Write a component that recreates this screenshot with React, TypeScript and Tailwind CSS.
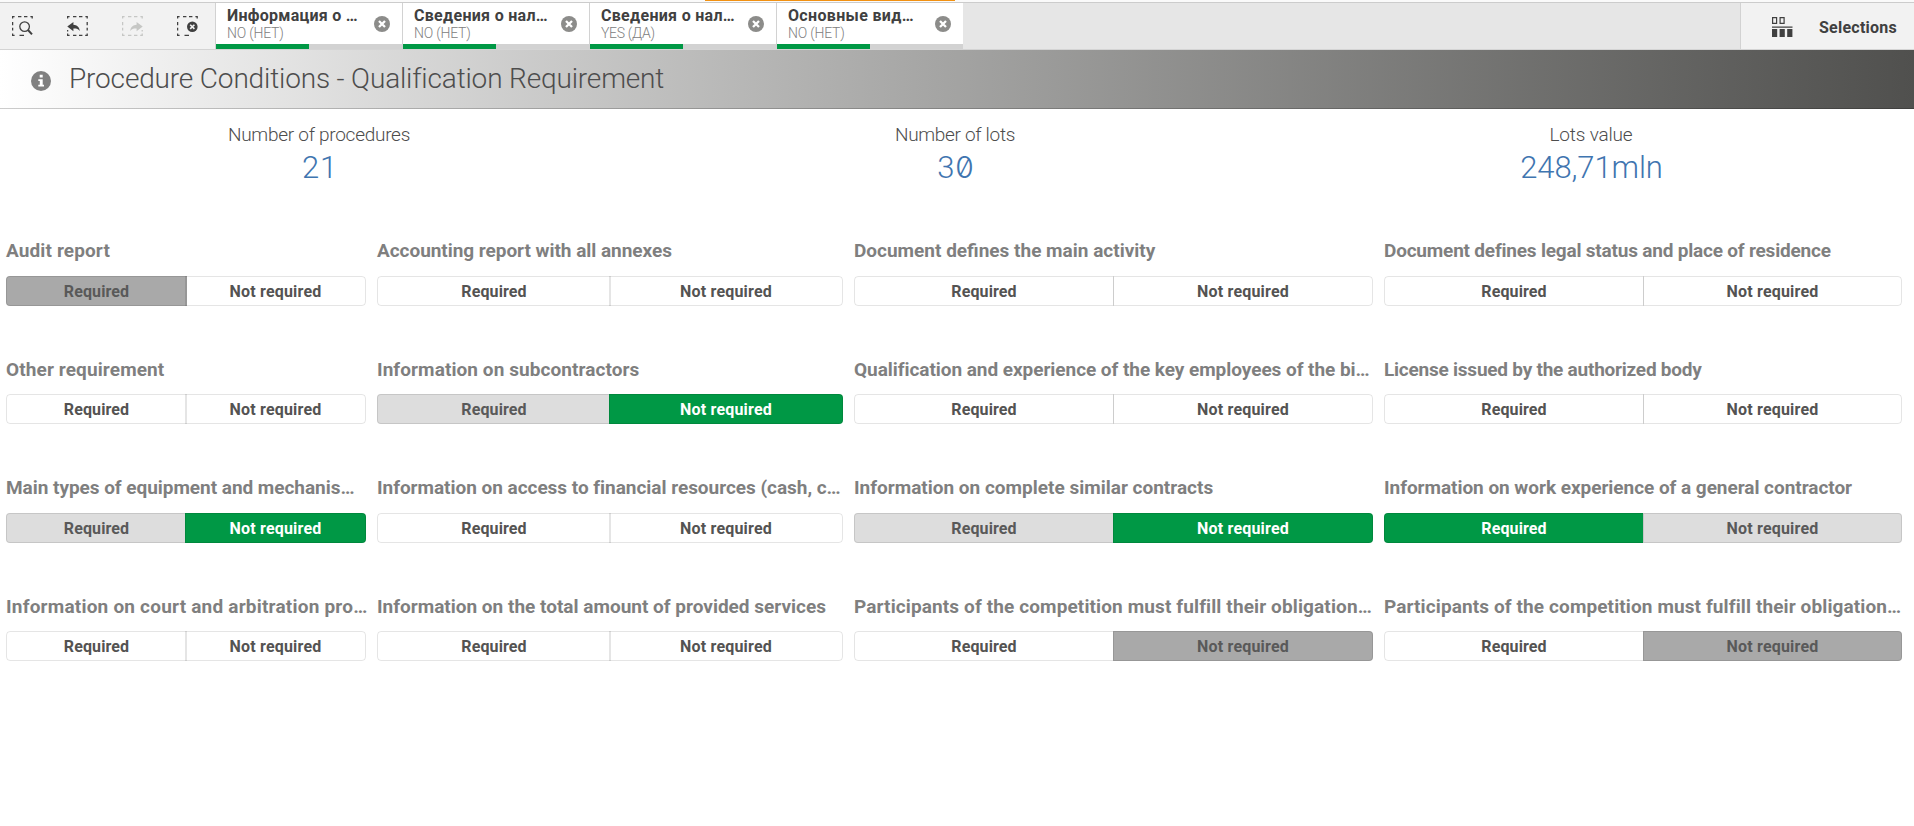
import type { ReactNode } from "react";

type State = "none" | "selected" | "alternative" | "excluded";

type Filter = {
  title: string;
  tracking: string;
  states: [State, State];
};

const stateStyles: Record<State, string> = {
  none: "bg-transparent text-[#545352]",
  selected: "bg-[#009845] text-white",
  alternative: "bg-[#dddddd] text-[#595959]",
  excluded: "bg-[#a9a9a9] text-[#595959]",
};

const firstWidths = ["w-[181px]", "w-[234px]", "w-[260px]", "w-[260px]"];
const columnOverlap = ["-ml-[2px]", "-ml-[2px]", "-ml-px", "-ml-px"];

const filters: Filter[] = [
  { title: "Audit report", tracking: "tracking-[0.12px]", states: ["excluded", "none"] },
  { title: "Accounting report with all annexes", tracking: "tracking-[-0.04px]", states: ["none", "none"] },
  { title: "Document defines the main activity", tracking: "tracking-normal", states: ["none", "none"] },
  { title: "Document defines legal status and place of residence", tracking: "tracking-[-0.2px]", states: ["none", "none"] },
  { title: "Other requirement", tracking: "tracking-[0.12px]", states: ["none", "none"] },
  { title: "Information on subcontractors", tracking: "tracking-[0.08px]", states: ["alternative", "selected"] },
  { title: "Qualification and experience of the key employees of the bi…", tracking: "tracking-[-0.05px]", states: ["none", "none"] },
  { title: "License issued by the authorized body", tracking: "tracking-[-0.23px]", states: ["none", "none"] },
  { title: "Main types of equipment and mechanis…", tracking: "tracking-[-0.04px]", states: ["alternative", "selected"] },
  { title: "Information on access to financial resources (cash, c…", tracking: "tracking-[-0.03px]", states: ["none", "none"] },
  { title: "Information on complete similar contracts", tracking: "tracking-normal", states: ["alternative", "selected"] },
  { title: "Information on work experience of a general contractor", tracking: "tracking-[-0.04px]", states: ["selected", "alternative"] },
  { title: "Information on court and arbitration pro…", tracking: "tracking-[0.21px]", states: ["none", "none"] },
  { title: "Information on the total amount of provided services", tracking: "tracking-normal", states: ["none", "none"] },
  { title: "Participants of the competition must fulfill their obligation…", tracking: "tracking-[0.12px]", states: ["none", "excluded"] },
  { title: "Participants of the competition must fulfill their obligation…", tracking: "tracking-[0.11px]", states: ["none", "excluded"] },
];

const tabs = [
  { name: "Информация о …", tracking: "tracking-[0.26px]", value: "NO (НЕТ)", valueTracking: "tracking-[-0.2px]" },
  { name: "Сведения о нал…", tracking: "tracking-[0.3px]", value: "NO (НЕТ)", valueTracking: "tracking-[-0.2px]" },
  { name: "Сведения о нал…", tracking: "tracking-[0.3px]", value: "YES (ДА)", valueTracking: "tracking-[-0.3px]" },
  { name: "Основные вид…", tracking: "tracking-[0.34px]", value: "NO (НЕТ)", valueTracking: "tracking-[-0.2px]" },
];

function ToolIcon({ frame, children, className }: { frame: string; children: ReactNode; className: string }) {
  return (
    <svg viewBox="0 0 21 20" className={`h-5 w-[21px] shrink-0 ${className}`} fill="none">
      <path d={frame} stroke="currentColor" strokeWidth="1.3" />
      {children}
    </svg>
  );
}

const FRAME_TOP = "M0.6 2.4V0.6H2.6M6 0.6H9.4M12 0.6H15.4M18.4 0.6H20.2V2.6";
const FRAME_LEFT = "M0.6 6V9.2M0.6 11.8V14.4M0.6 17.4V19.4H2.6";

function CloseIcon() {
  return (
    <svg viewBox="0 0 16 16" className="size-4 shrink-0">
      <circle cx="8" cy="8" r="8" fill="#8c8c8a" />
      <path d="M5 5L11 11M11 5L5 11" stroke="#fff" strokeWidth="2.3" />
    </svg>
  );
}

function Tab({ tab }: { tab: (typeof tabs)[number] }) {
  return (
    <div className="flex w-[187px] flex-col border-l border-[#d2d2d2] bg-white">
      <div className="flex h-[41px] pl-[11px]">
        <div className="w-[147px] whitespace-nowrap pt-[3px]">
          <div className={`text-[16px] leading-[20px] font-bold text-[#404040] ${tab.tracking}`}>{tab.name}</div>
          <div className={`text-[14px] leading-[15px] font-[350] text-[#808080] ${tab.valueTracking}`}>{tab.value}</div>
        </div>
        <div className="pt-[13px]">
          <CloseIcon />
        </div>
      </div>
      <div className="flex h-[5px] bg-[#d2d2d2]">
        <div className="w-1/2 bg-[#009845]" />
      </div>
    </div>
  );
}

function Toolbar() {
  return (
    <div className="flex h-[48px] border-t border-b border-t-[#cccccc] border-b-[#d4d4d4] bg-[#e6e6e6]">
      <div className="flex w-[215px] bg-[#f2f2f2] pt-[13px] pl-[12px]">
        <ToolIcon frame={`${FRAME_TOP}${FRAME_LEFT}M7.5 19.4H12`} className="mr-[34px] text-[#404040]">
          <circle cx="12.6" cy="10.6" r="4.8" stroke="currentColor" strokeWidth="1.3" />
          <path d="M16 14L20 18.4" stroke="currentColor" strokeWidth="2" />
        </ToolIcon>
        <ToolIcon
          frame={`${FRAME_TOP}M20.2 6V9.2M20.2 11.8V14.4M20.2 17.4V19.4H18.2M0.6 14V15.4M0.6 17.4V19.4H2.6M6 19.4H9.4M12 19.4H15.4`}
          className="mr-[34px] text-[#404040]"
        >
          <path d="M0.3 10.6L6.4 6V8.8C10 9 12.3 11 12.8 15C11 12.8 9 12.4 6.4 12.6V15.2Z" fill="currentColor" />
        </ToolIcon>
        <ToolIcon
          frame={`${FRAME_TOP}${FRAME_LEFT}M6 19.4H9.4M12 19.4H15.4M18.2 19.4H20.2V17.4M20.2 14V15.4`}
          className="mr-[34px] text-[#c6c7c5]"
        >
          <path d="M20.7 10.6L14.6 6V8.8C11 9 8.7 11 8.2 15C10 12.8 12 12.4 14.6 12.6V15.2Z" fill="currentColor" />
        </ToolIcon>
        <ToolIcon frame={`${FRAME_TOP}${FRAME_LEFT}M7.5 19.4H12`} className="text-[#404040]">
          <circle cx="15.3" cy="10.8" r="5.3" fill="currentColor" />
          <path d="M13.2 8.7L17.4 12.9M17.4 8.7L13.2 12.9" stroke="#f2f2f2" strokeWidth="1.6" />
        </ToolIcon>
      </div>
      {tabs.map((tab, i) => (
        <Tab key={i} tab={tab} />
      ))}
      <div className="ml-auto flex w-[174px] border-l border-[#d2d2d2] bg-[#f2f2f2] pl-[31px]">
        <svg viewBox="0 0 21 20" className="mt-[14px] h-5 w-[21px] shrink-0 text-[#404040]" fill="currentColor">
          <path d="M0.6 0.6H4.6V6.4H0.6ZM8.1 0.6H12.1V6.4H8.1Z" fill="none" stroke="currentColor" strokeWidth="1.2" />
          <path d="M0 9.5H20.5V10.7H0ZM0 12H5.2V20H0ZM7.6 12H12.8V20H7.6ZM15.2 12H20.4V20H15.2Z" />
        </svg>
        <div className="ml-[26px] pt-[15px] text-[16px] leading-[20px] font-bold tracking-[0.24px] text-[#404040]">
          Selections
        </div>
      </div>
    </div>
  );
}

function Kpi({ label, tracking, children }: { label: string; tracking: string; children: ReactNode }) {
  return (
    <div className="flex w-[636px] flex-col items-center whitespace-nowrap">
      <div className={`text-[19px] leading-[24px] font-light text-[#4d4d4d] ${tracking}`}>{label}</div>
      <div className="mt-[3px] text-[31px] leading-[36px] font-light text-[#3f75b0]">{children}</div>
    </div>
  );
}

function FilterBox({ filter, column }: { filter: Filter; column: number }) {
  const [first, second] = filter.states;
  return (
    <div className="min-w-0">
      <div className={`text-[19px] leading-[24px] font-bold whitespace-nowrap text-[#7f7f7f] ${filter.tracking}`}>
        {filter.title}
      </div>
      <div className="mt-[12.85px] flex h-[30px] text-center text-[16px] leading-[30.4px] font-bold">
        <div
          className={`shrink-0 rounded-l-[4px] border border-black/10 tracking-[0.12px] ${firstWidths[column]} ${stateStyles[first]}`}
        >
          Required
        </div>
        <div
          className={`flex-1 rounded-r-[4px] border border-black/10 tracking-[0.2px] ${columnOverlap[column]} ${stateStyles[second]}`}
        >
          Not required
        </div>
      </div>
    </div>
  );
}

export default function App() {
  return (
    <div className="h-[826px] w-[1914px] overflow-hidden bg-white font-['Roboto','Liberation_Sans',sans-serif]">
      <div className="h-[2px] bg-[#fafafa]">
        <div className="ml-[705px] h-px w-[250px] bg-[#f29111]" />
      </div>
      <Toolbar />
      <header className="flex h-[59px] items-start border-b border-black/20 bg-linear-to-r from-white to-[#50504e]">
        <svg viewBox="0 0 20 20" className="mt-[21px] ml-[31px] size-5 shrink-0">
          <circle cx="10" cy="10" r="10" fill="#808080" />
          <path d="M8.7 3.8H11.7V6.4H8.7ZM7.3 8.2H11.7V13.8H13V15.6H7.3V13.8H8.8V10H7.3Z" fill="#fff" />
        </svg>
        <h1 className="ml-[18px] pt-[11px] text-[28px] leading-[36px] font-[350] tracking-[-0.16px] text-[#4d4d4d]">
          Procedure Conditions - Qualification Requirement
        </h1>
      </header>
      <div className="flex pt-[13.5px] pl-px">
        <Kpi label="Number of procedures" tracking="tracking-[-0.27px]">
          <span className="pl-[2px] tracking-[0.8px]">21</span>
        </Kpi>
        <Kpi label="Number of lots" tracking="tracking-[-0.31px]">
          <span className="pl-px tracking-[0.8px]">3</span>
          <span className="font-['Inter'] text-[30px] leading-[0] [font-feature-settings:'zero']">0</span>
        </Kpi>
        <Kpi label="Lots value" tracking="tracking-[-0.18px]">
          <span className="pl-px tracking-[-0.1px]">248,71mln</span>
        </Kpi>
      </div>
      <main className="mt-[53.55px] grid auto-rows-[118.5px] grid-cols-[360px_466px_519px_518px] gap-x-[11px] pl-[6px]">
        {filters.map((filter, i) => (
          <FilterBox key={i} filter={filter} column={i % 4} />
        ))}
      </main>
    </div>
  );
}
